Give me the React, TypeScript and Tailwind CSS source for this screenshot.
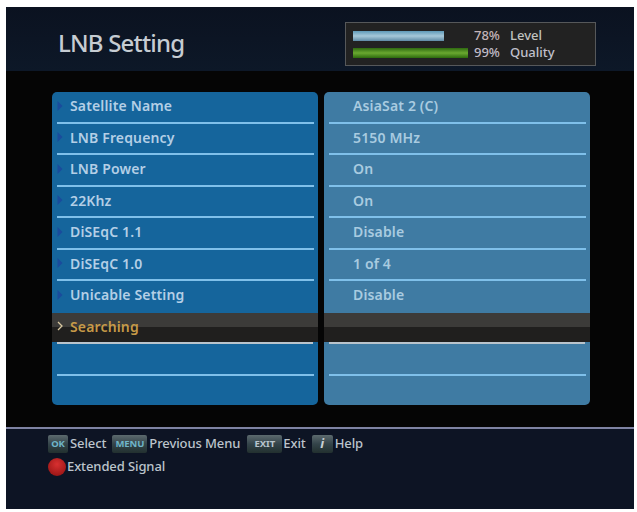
const labels = ['Satellite Name', 'LNB Frequency', 'LNB Power', '22Khz', 'DiSEqC 1.1', 'DiSEqC 1.0', 'Unicable Setting', 'Searching', '', '']
const values = ['AsiaSat 2 (C)', '5150 MHz', 'On', 'On', 'Disable', '1 of 4', 'Disable', '', '', '']
const SELECTED = 7

function Arrow({ selected }: { selected: boolean }) {
  if (selected) {
    return (
      <svg width="6" height="10" viewBox="0 0 6 10" className="shrink-0">
        <path d="M1 1l4 4-4 4" fill="none" stroke="#d8c8a0" strokeWidth="1.3" />
      </svg>
    )
  }
  return (
    <svg width="6" height="10" viewBox="0 0 6 10" className="shrink-0">
      <path d="M0.5 0l5 5-5 5z" fill="#1a4c9c" />
    </svg>
  )
}

function Row({ text, index, side }: { text: string; index: number; side: 'left' | 'right' }) {
  const selected = index === SELECTED
  const isLast = index === labels.length - 1
  const hasLine = !isLast && !selected && index !== SELECTED - 1
  return (
    <div className="relative h-[31.5px] shrink-0">
      {selected && (
        <div className="absolute inset-0 flex flex-col">
          <div className="h-[14px] bg-[#3c3b39]" />
          <div className="flex-1 bg-[#201f1e]" />
          <div className="h-[2px] mx-[5px] bg-[#b9c4cc]" />
        </div>
      )}
      <div className={`relative flex h-[27px] items-center ${side === 'left' ? 'pl-[5px]' : 'pl-[29px]'}`}>
        {side === 'left' && text && <Arrow selected={selected} />}
        <span
          className={`font-semibold text-[14px] tracking-[0.15px] whitespace-pre ${side === 'left' ? 'ml-[7px]' : ''} ${
            selected ? 'text-[#c79a48]' : side === 'left' ? 'text-[#b4cfe6]' : 'text-[#a9cbe0]'
          }`}
        >
          {text}
        </span>
      </div>
      {hasLine && <div className="absolute left-[5px] right-[4px] bottom-0 h-[2px] bg-[#7fc0ea]" />}
    </div>
  )
}

function Key({ label, width, color = 'text-[#6fb5c8]' }: { label: string; width: string; color?: string }) {
  return (
    <span
      className={`flex h-[18px] items-center justify-center rounded-[2px] bg-gradient-to-b from-[#5c6a6e] via-[#34444a] to-[#22302f] text-[9.5px] font-bold ${width} ${color}`}
    >
      {label}
    </span>
  )
}

export default function App() {
  return (
    <div className="h-[512px] w-[637px] overflow-hidden bg-white pl-[6px] pt-[7px] font-['Noto_Sans',sans-serif]">
      <div className="flex h-[502px] w-[628px] flex-col bg-[#050505]">
        {/* Header */}
        <div className="flex h-[64px] shrink-0 items-start justify-between bg-gradient-to-b from-[#0b1220] to-[#0d1828] pl-[52px] pr-[38px] pt-[15px]">
          <h1 className="mt-[9px] text-[24px] font-medium leading-none tracking-[-0.8px] text-[#c6ccd2]">LNB Setting</h1>
          <div className="flex h-[44px] w-[251px] flex-col justify-center gap-[7px] border border-[#56585a] bg-[#222222] pl-[7px]">
            <div className="flex h-[10px] items-center">
              <div className="w-[115px]">
                <div className="h-[10px] w-[91px] bg-gradient-to-b from-[#5f9ab8] via-[#a6c8d8] to-[#5f8ba5]" />
              </div>
              <span className="ml-[6px] w-[36px] text-[13px] font-medium text-[#c4b4b8]">78%</span>
              <span className="text-[13px] font-medium text-[#c0c4c0]">Level</span>
            </div>
            <div className="flex h-[10px] items-center">
              <div className="h-[10px] w-[115px] bg-gradient-to-b from-[#2e6a10] via-[#6aa830] to-[#2c6a0c]" />
              <span className="ml-[6px] w-[36px] text-[13px] font-medium text-[#c0bcc8]">99%</span>
              <span className="text-[13px] font-medium text-[#c0c0cc]">Quality</span>
            </div>
          </div>
        </div>

        {/* Panels */}
        <div className="flex flex-1 gap-[6px] pl-[46px] pt-[21px]">
          <div className="flex h-[313px] w-[266px] flex-col overflow-hidden rounded-[5px] bg-[#15659c]">
            {labels.map((l, i) => (
              <Row key={i} text={l} index={i} side="left" />
            ))}
          </div>
          <div className="flex h-[313px] w-[266px] flex-col overflow-hidden rounded-[5px] bg-[#3f7ba3]">
            {values.map((v, i) => (
              <Row key={i} text={v} index={i} side="right" />
            ))}
          </div>
        </div>

        {/* Footer */}
        <div className="h-[2px] shrink-0 bg-[#7f83a3]" />
        <div className="flex h-[80px] shrink-0 flex-col gap-[5px] bg-[#0d1424] pl-[42px] pt-[6px] text-[13px] font-medium tracking-[-0.1px] text-[#bcc4cc]">
          <div className="flex h-[18px] items-center">
            <Key label="OK" width="w-[20px]" />
            <span className="ml-[2px]">Select</span>
            <span className="ml-[6px]">
              <Key label="MENU" width="w-[35px]" />
            </span>
            <span className="ml-[2px]">Previous Menu</span>
            <span className="ml-[7px]">
              <Key label="EXIT" width="w-[35px]" color="text-[#b8c4cc]" />
            </span>
            <span className="ml-[1px]">Exit</span>
            <span className="ml-[6px]">
              <Key label="i" width="w-[21px]" color="text-[#c8d0d4] italic text-[13px]" />
            </span>
            <span className="ml-[2px]">Help</span>
          </div>
          <div className="flex h-[18px] items-center">
            <span className="h-[18px] w-[18px] rounded-full bg-[radial-gradient(circle_at_50%_35%,#d83030,#8c1010)]" />
            <span className="ml-[1px]">Extended Signal</span>
          </div>
        </div>
      </div>
    </div>
  )
}
